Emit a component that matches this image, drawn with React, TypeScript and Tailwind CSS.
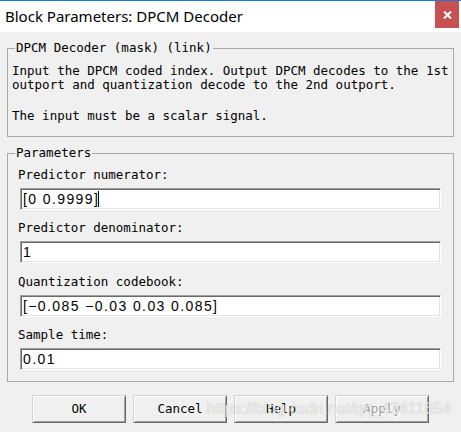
import React from "react";

const mono = { fontFamily: '"DejaVu Sans Mono", "Liberation Mono", monospace' };

function Field({ label, value, caret, gapTop }: { label: string; value: string; caret?: boolean; gapTop: string }) {
  return (
    <div className={gapTop}>
      <div className="pl-[10px] text-[12.5px] leading-[14px] text-black" style={mono}>
        {label}
      </div>
      <div className="mx-[12px] mt-[6px] h-[22px] border border-t-[#a0a0a0] border-l-[#a0a0a0] border-b-white border-r-white bg-white shadow-[inset_1px_1px_0_#696969,inset_-1px_-1px_0_#e3e3e3] pl-[2px] flex items-center">
        <span className="font-['Liberation_Sans',Arial,sans-serif] text-[14px] leading-[20px] tracking-[1.4px] text-black whitespace-pre">
          {value}
        </span>
        {caret && <span className="inline-block w-px h-[16px] bg-black -ml-[1px]" />}
      </div>
    </div>
  );
}

function Btn({ children, disabled }: { children: React.ReactNode; disabled?: boolean }) {
  return (
    <div
      className={
        "w-[94px] h-[28px] flex items-center justify-center border border-t-[#d4d4d4] border-l-[#d4d4d4] border-b-[#696969] border-r-[#696969] bg-[#f0f0f0] shadow-[inset_1px_1px_0_#ffffff,inset_-1px_-1px_0_#a0a0a0] text-[12.5px] leading-[14px] " +
        (disabled ? "text-[#a0a0a0] [text-shadow:1px_1px_0_#ffffff]" : "text-black")
      }
      style={mono}
    >
      {children}
    </div>
  );
}

export default function App() {
  return (
    <div className="relative w-[461px] h-[432px] bg-[#f0f0f0] overflow-hidden">
      {/* Title bar */}
      <div className="h-[32px] bg-white border-t border-[#1b7bd4] flex items-start justify-between">
        <div className="h-[31px] flex items-center pl-[5px] font-['Noto_Sans',sans-serif] text-[15px] text-black">
          Block Parameters: DPCM Decoder
        </div>
        <div className="mr-[2px] w-[24px] h-[27px] bg-[#c75050] flex items-center justify-center">
          <svg width="9" height="8" viewBox="0 0 9 8">
            <path d="M1 0.5 L8 7.5 M8 0.5 L1 7.5" stroke="#ffffff" strokeWidth="2" />
          </svg>
        </div>
      </div>

      {/* Group 1 */}
      <fieldset className="mx-[7px] mt-[9px] border border-[#a9a9a9] pb-[13px]">
        <legend className="ml-[7px] px-[1px] text-[12.5px] leading-[14px] text-black" style={mono}>
          DPCM Decoder (mask) (link)
        </legend>
        <div className="pt-[9px] pl-[4px] text-[12.5px] leading-[14px] text-black whitespace-pre" style={mono}>
          <div>Input the DPCM coded index. Output DPCM decodes to the 1st</div>
          <div>outport and quantization decode to the 2nd outport.</div>
          <div className="mt-[17px]">The input must be a scalar signal.</div>
        </div>
      </fieldset>

      {/* Group 2 */}
      <fieldset className="mx-[7px] mt-[9px] border border-[#a9a9a9] pt-[8px] pb-[11px]">
        <legend className="ml-[7px] px-[1px] text-[12.5px] leading-[14px] text-black" style={mono}>
          Parameters
        </legend>
        <Field label="Predictor numerator:" value="[0 0.9999]" caret gapTop="" />
        <Field label="Predictor denominator:" value="1" gapTop="mt-[11px]" />
        <Field label="Quantization codebook:" value="[−0.085 −0.03 0.03 0.085]" gapTop="mt-[12px]" />
        <Field label="Sample time:" value="0.01" gapTop="mt-[11px]" />
      </fieldset>

      {/* Buttons */}
      <div className="mt-[13px] pl-[32px] flex gap-[7px]">
        <Btn>OK</Btn>
        <Btn>Cancel</Btn>
        <Btn>Help</Btn>
        <Btn disabled>Apply</Btn>
      </div>

      {/* Watermark */}
      <div className="absolute left-[207px] top-[399px] font-['Liberation_Sans',Arial,sans-serif] text-[16px] leading-[20px] text-[rgba(255,255,255,0.85)] [text-shadow:0_0_1px_rgba(0,0,0,0.35)] whitespace-pre pointer-events-none">
        https://blog.csdn.net/qq_43411654
      </div>
    </div>
  );
}
